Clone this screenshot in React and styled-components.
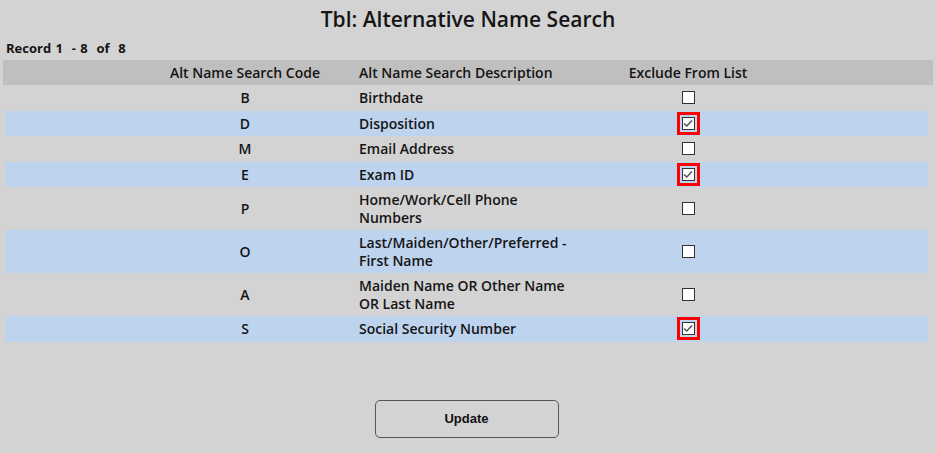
import styled, { createGlobalStyle } from 'styled-components'

const GlobalStyle = createGlobalStyle`
  html, body {
    margin: 0;
    padding: 0;
    background: #d3d3d3;
  }
  body {
    font-family: "Open Sans", "Liberation Sans", Arial, sans-serif;
    color: #151515;
  }
`

const Page = styled.div`
  width: 936px;
  height: 453px;
  background: #d3d3d3;
  display: flex;
  flex-direction: column;
`

const Title = styled.h1`
  margin: 0;
  padding-top: 6px;
  height: 28px;
  font-size: 21px;
  line-height: 26px;
  font-weight: 600;
  text-align: center;
`

const RecordInfo = styled.div`
  margin: 5px 0 0 6px;
  font-size: 13px;
  line-height: 18px;
  font-weight: 700;
  word-spacing: 1px;
`

const HeaderBar = styled.div`
  margin: 3px 3px 0 3px;
  padding: 0 5px 0 3px;
  background: #bfbfbf;
`

const Grid = styled.div`
  display: grid;
  grid-template-columns: 154px 170px 29px 216px 226px 1fr;
  align-items: center;
  font-size: 14px;
  line-height: 17.5px;
  font-weight: 600;
`

const HeaderGrid = styled(Grid)`
  height: 25px;
`

const Rows = styled.div`
  margin: 0 8px 0 6px;
  display: flex;
  flex-direction: column;
`

const Row = styled(Grid)`
  padding: 4px 0;
  background: ${(p) => (p.$alt ? '#bdd3ee' : 'transparent')};
`

const Cell = styled.div`
  grid-column: ${(p) => p.$col};
  text-align: ${(p) => p.$align || 'left'};
  padding-right: ${(p) => (p.$col === 4 ? '4px' : '0')};
  display: ${(p) => (p.$flex ? 'flex' : 'block')};
  justify-content: center;
  align-items: center;
  height: ${(p) => (p.$flex ? '17px' : 'auto')};
`

const CheckFrame = styled.span`
  display: inline-flex;
  padding: 2px;
  margin: -5px;
  border: 3px solid ${(p) => (p.$marked ? '#ff0000' : 'transparent')};
`

const Box = styled.span`
  width: 11px;
  height: 11px;
  background: #fff;
  border: 1px solid #333;
  display: flex;
  align-items: center;
  justify-content: center;
`

const Footer = styled.div`
  display: flex;
  justify-content: center;
  margin-top: 58px;
`

const UpdateButton = styled.button`
  width: 184px;
  height: 38px;
  margin-left: -3px;
  background: #d3d3d3;
  border: 1px solid #555;
  border-radius: 5px;
  font-family: "Liberation Sans", Arial, sans-serif;
  font-size: 13px;
  font-weight: 700;
  color: #111;
`

const rows = [
  { code: 'B', desc: 'Birthdate', checked: false },
  { code: 'D', desc: 'Disposition', checked: true },
  { code: 'M', desc: 'Email Address', checked: false },
  { code: 'E', desc: 'Exam ID', checked: true },
  { code: 'P', desc: 'Home/Work/Cell Phone Numbers', checked: false },
  { code: 'O', desc: 'Last/Maiden/Other/Preferred - First Name', checked: false },
  { code: 'A', desc: 'Maiden Name OR Other Name OR Last Name', checked: false },
  { code: 'S', desc: 'Social Security Number', checked: true },
]

const Checkbox = ({ checked }) => (
  <CheckFrame $marked={checked}>
    <Box>
      {checked && (
        <svg width="10" height="9" viewBox="0 0 10 9">
          <path d="M1 4.5 L3.8 7 L9 1.5" fill="none" stroke="#555" strokeWidth="1.6" />
        </svg>
      )}
    </Box>
  </CheckFrame>
)

const App = () => {
  return (
    <Page>
      <GlobalStyle />
      <Title>Tbl: Alternative Name Search</Title>
      <RecordInfo>Record 1&nbsp; - 8&nbsp; of&nbsp; 8</RecordInfo>
      <HeaderBar>
        <HeaderGrid>
          <Cell $col={2} $align="center">Alt Name Search Code</Cell>
          <Cell $col={4}>Alt Name Search Description</Cell>
          <Cell $col={5} $align="center">Exclude From List</Cell>
        </HeaderGrid>
      </HeaderBar>
      <Rows>
        {rows.map((r, i) => (
          <Row key={r.code} $alt={i % 2 === 1}>
            <Cell $col={2} $align="center">{r.code}</Cell>
            <Cell $col={4}>{r.desc}</Cell>
            <Cell $col={5} $flex>
              <Checkbox checked={r.checked} />
            </Cell>
          </Row>
        ))}
      </Rows>
      <Footer>
        <UpdateButton>Update</UpdateButton>
      </Footer>
    </Page>
  )
}

export default App
